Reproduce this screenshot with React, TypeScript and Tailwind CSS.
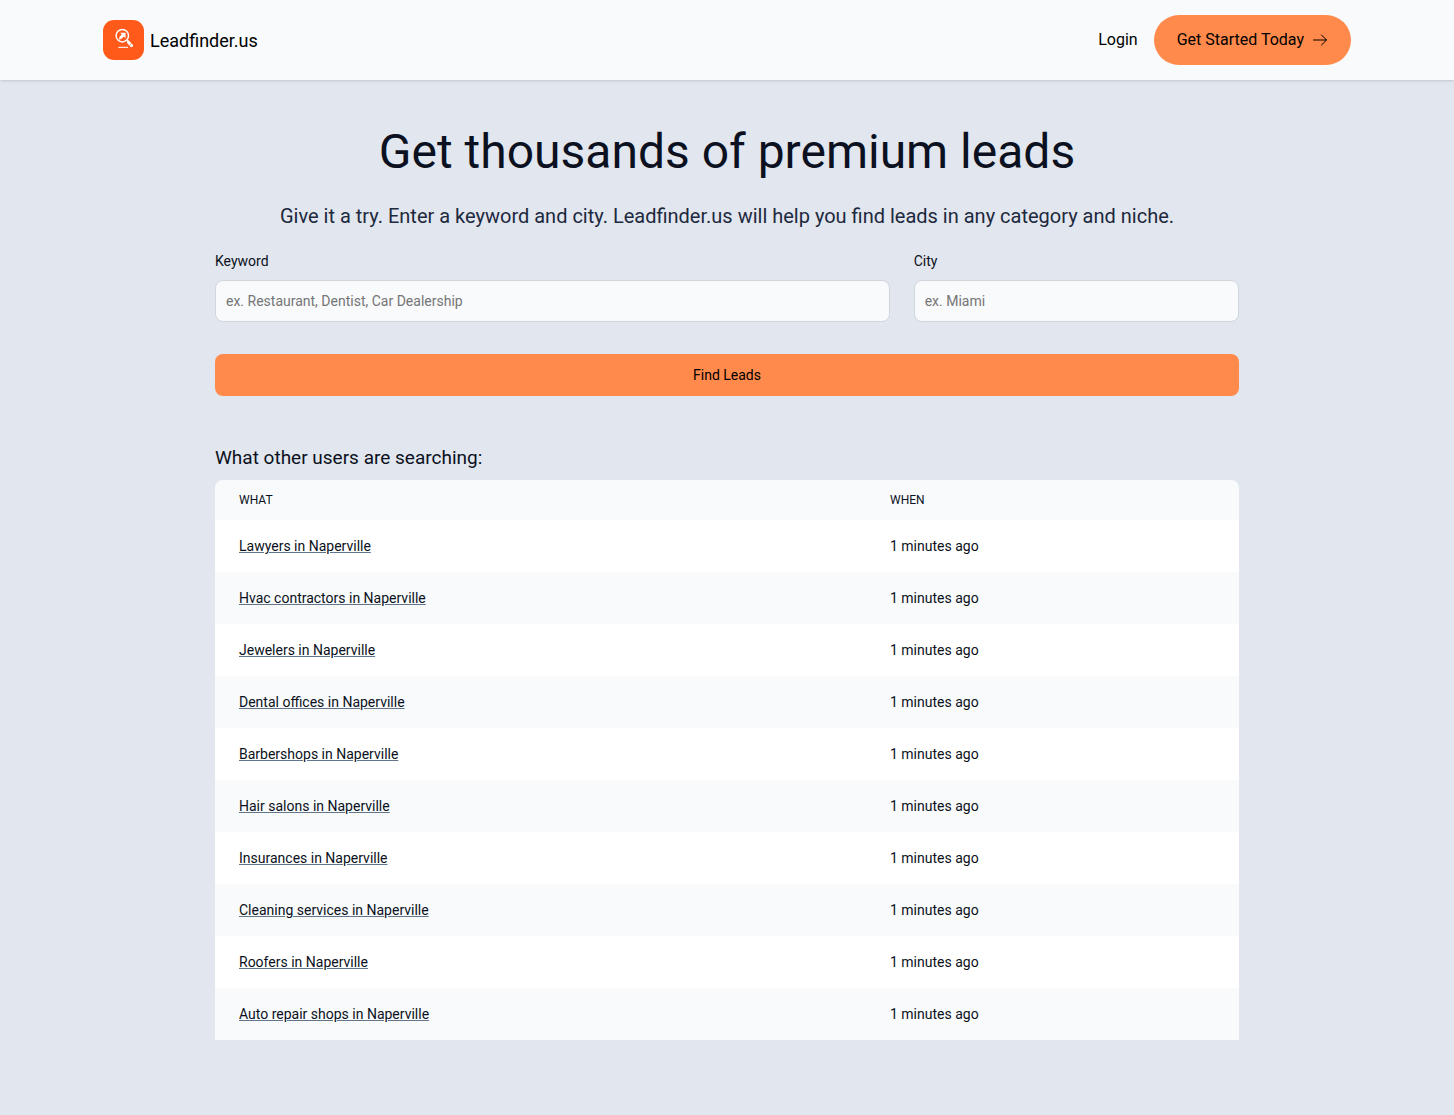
import React from 'react';

const searches = [
  'Lawyers in Naperville',
  'Hvac contractors in Naperville',
  'Jewelers in Naperville',
  'Dental offices in Naperville',
  'Barbershops in Naperville',
  'Hair salons in Naperville',
  'Insurances in Naperville',
  'Cleaning services in Naperville',
  'Roofers in Naperville',
  'Auto repair shops in Naperville',
];

const Logo: React.FC = () => (
  <svg viewBox="0 0 41 40" className="w-[41px] h-10" aria-hidden="true">
    <rect width="41" height="40" rx="11" fill="#ff5a1a" />
    <circle cx="19.3" cy="15.7" r="6.2" fill="none" stroke="#fff" strokeWidth="1.5" />
    <path d="M15.8 19.8l.8-3 2.2-2.2-1.6-1.8h5.4v5.4l-1.8-1.6-2.2 2.2z" fill="#fff" />
    <path d="M24 20l2.2 2.2" stroke="#fff" strokeWidth="1.4" />
    <path d="M25.4 22.2l3.2 3.4" stroke="#fff" strokeWidth="3" strokeLinecap="round" />
    <path d="M26.4 25.4l2.6-2.4" stroke="#ff5a1a" strokeWidth="0.6" />
    <path d="M15.8 27.4h8.8" stroke="#fff" strokeWidth="1.2" strokeLinecap="round" opacity="0.85" />
  </svg>
);

const Header: React.FC = () => (
  <header className="relative bg-slate-50 shadow">
    <div className="max-w-7xl mx-auto px-4 h-20 flex items-center justify-between">
      <a href="#" className="flex items-center gap-[6px] text-lg text-black">
        <Logo />
        <span className="pt-[2px]">Leadfinder.us</span>
      </a>
      <nav className="flex items-center gap-4 text-black">
        <a href="#login">Login</a>
        <a href="#signup" className="flex items-center gap-2 h-[50px] px-[23px] rounded-full bg-[#ff8a4c]">
          Get Started Today
          <svg viewBox="0 0 16 16" className="w-4 h-4" fill="none" stroke="currentColor" strokeLinecap="round" strokeLinejoin="round" aria-hidden="true">
            <path d="M1.5 8h13M9.5 3l5 5-5 5" />
          </svg>
        </a>
      </nav>
    </div>
  </header>
);

const SearchForm: React.FC = () => (
  <form className="mt-[21px]" onSubmit={(e) => e.preventDefault()}>
    <div className="grid grid-cols-3 gap-6 text-sm">
      <div className="col-span-2">
        <label htmlFor="keyword" className="block mb-[9px]">Keyword</label>
        <input
          id="keyword"
          type="text"
          placeholder="ex. Restaurant, Dentist, Car Dealership"
          className="block w-full h-[42px] px-[10px] rounded-lg border border-gray-300 bg-slate-50 placeholder:text-[#757575]"
        />
      </div>
      <div>
        <label htmlFor="city" className="block mb-[9px]">City</label>
        <input
          id="city"
          type="text"
          placeholder="ex. Miami"
          className="block w-full h-[42px] px-[10px] rounded-lg border border-gray-300 bg-slate-50 placeholder:text-[#757575]"
        />
      </div>
    </div>
    <button type="submit" className="mt-8 w-full h-[42px] rounded-lg bg-[#ff8a4c] text-sm text-black">
      Find Leads
    </button>
  </form>
);

const App: React.FC = () => {
  return (
    <div className="min-h-screen bg-[#e2e6ef] text-[#0b1120] font-['Roboto',sans-serif]">
      <Header />
      <main className="max-w-5xl mx-auto pt-12 pb-[75px]">
        <h1 className="text-5xl text-center">Get thousands of premium leads</h1>
        <p className="mt-[26px] text-xl text-slate-800 text-center">
          Give it a try. Enter a keyword and city. Leadfinder.us will help you find leads in any category and niche.
        </p>
        <SearchForm />

        <h2 className="mt-12 mb-2 text-[19px] leading-7">What other users are searching:</h2>
        <div className="overflow-hidden rounded-t-lg">
          <table className="w-full table-fixed text-sm text-left">
            <thead className="text-xs uppercase bg-slate-50">
              <tr>
                <th scope="col" className="w-[651px] px-6 py-3 font-normal">What</th>
                <th scope="col" className="px-6 py-3 font-normal">When</th>
              </tr>
            </thead>
            <tbody>
              {searches.map((search) => (
                <tr key={search} className="bg-white even:bg-slate-50">
                  <td className="px-6 py-4">
                    <a href="#search" className="underline decoration-slate-500">{search}</a>
                  </td>
                  <td className="px-6 py-4">1 minutes ago</td>
                </tr>
              ))}
            </tbody>
          </table>
        </div>
      </main>
    </div>
  );
};

export default App;
